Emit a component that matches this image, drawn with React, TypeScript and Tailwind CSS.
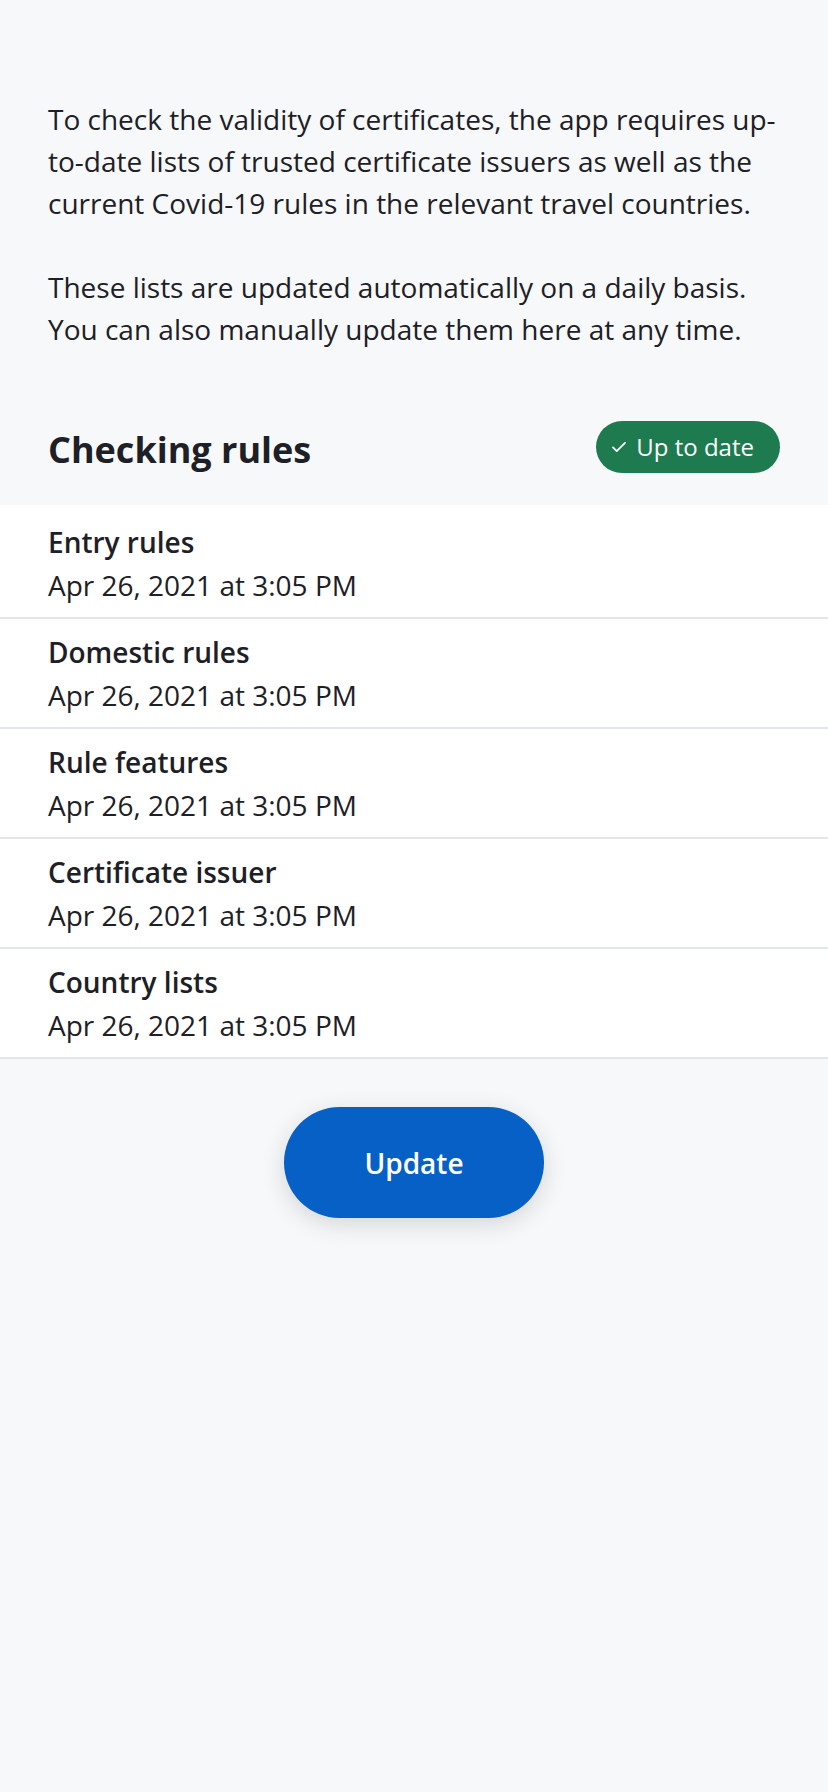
import React from "react";

const rows = [
  "Entry rules",
  "Domestic rules",
  "Rule features",
  "Certificate issuer",
  "Country lists",
];

export default function App() {
  return (
    <div
      className="min-h-[1792px] w-full bg-[#f7f8fa] text-[#1d2026]"
      style={{ fontFamily: '"Open Sans", "Noto Sans", sans-serif' }}
    >
      <div className="px-[48px] pt-[98px]">
        <p className="text-[28px] leading-[42px]">
          To check the validity of certificates, the app requires up-
          <br />
          to-date lists of trusted certificate issuers as well as the
          <br />
          current Covid-19 rules in the relevant travel countries.
        </p>
        <p className="mt-[42px] text-[28px] leading-[42px]">
          These lists are updated automatically on a daily basis.
          <br />
          You can also manually update them here at any time.
        </p>
      </div>

      <div className="flex items-center justify-between px-[48px] pt-[71px] pb-[32px]">
        <h2 className="pt-[6px] text-[36px] font-bold leading-[46px]">Checking rules</h2>
        <div className="flex h-[52px] items-center gap-[8px] rounded-full bg-[#1e7b4f] pl-[14px] pr-[26px] text-white">
          <svg width="18" height="18" viewBox="0 0 24 24" fill="none" stroke="currentColor" strokeWidth="2.4" strokeLinecap="round" strokeLinejoin="round">
            <path d="M4 12.5l5 5L20 6.5" />
          </svg>
          <span className="text-[24px] leading-[32px]">Up to date</span>
        </div>
      </div>

      <div className="bg-white pt-[4px]">
        {rows.map((r) => (
          <div key={r} className="border-b-2 border-[#e3e6ea] px-[48px] pt-[12px] pb-[10px]">
            <div className="text-[28px] font-semibold leading-[43px]">{r}</div>
            <div className="text-[28px] leading-[43px]">Apr 26, 2021 at 3:05 PM</div>
          </div>
        ))}
      </div>

      <div className="flex justify-center pt-[48px]">
        <button className="h-[111px] w-[260px] rounded-full bg-[#0660c5] text-[28px] font-semibold text-white shadow-[0_6px_24px_rgba(0,0,0,0.14)]">
          Update
        </button>
      </div>
    </div>
  );
}
